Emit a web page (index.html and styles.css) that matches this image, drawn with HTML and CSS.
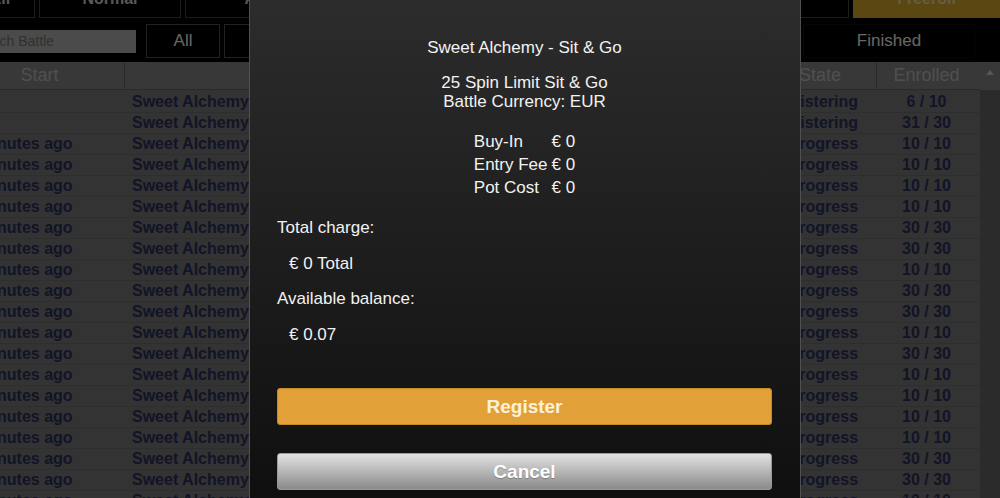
FILE: index.html
```html
<!DOCTYPE html>
<html lang="en">
<head>
    <meta charset="UTF-8">
    <meta name="viewport" content="width=device-width, initial-scale=1.0">
    <title>Battles - Register</title>
    <link rel="stylesheet" href="styles.css">
</head>
<body>
    <div class="page">
        <nav class="tabs">
            <a class="tab tab-small">All</a>
            <a class="tab tab-normal">Normal</a>
            <a class="tab tab-fill">Achievement</a>
            <a class="tab tab-fill">Tournament</a>
            <a class="tab tab-fill">Sit &amp; Go</a>
            <a class="tab tab-freeroll">Freeroll</a>
        </nav>

        <div class="filters">
            <input class="search" type="text" placeholder="Search Battle">
            <button class="filter filter-all">All</button>
            <button class="filter filter-fill">Registering</button>
            <button class="filter filter-fill">In Progress</button>
            <button class="filter filter-finished">Finished</button>
        </div>

        <div class="list">
            <div class="list-main">
                <div class="row row-head">
                    <div class="cell">Start</div>
                    <div class="cell">Battle</div>
                    <div class="cell">State</div>
                    <div class="cell cell-num">Enrolled</div>
                </div>
                <div class="list-body">
                    <div class="row"><div class="cell"></div><div class="cell">Sweet Alchemy - Sit &amp; Go</div><div class="cell">Registering</div><div class="cell cell-num">6 / 10</div></div>
                    <div class="row"><div class="cell"></div><div class="cell">Sweet Alchemy - Sit &amp; Go</div><div class="cell">Registering</div><div class="cell cell-num">31 / 30</div></div>
                    <div class="row"><div class="cell">2 minutes ago</div><div class="cell">Sweet Alchemy - Sit &amp; Go</div><div class="cell">In Progress</div><div class="cell cell-num">10 / 10</div></div>
                    <div class="row"><div class="cell">3 minutes ago</div><div class="cell">Sweet Alchemy - Sit &amp; Go</div><div class="cell">In Progress</div><div class="cell cell-num">10 / 10</div></div>
                    <div class="row"><div class="cell">3 minutes ago</div><div class="cell">Sweet Alchemy - Sit &amp; Go</div><div class="cell">In Progress</div><div class="cell cell-num">10 / 10</div></div>
                    <div class="row"><div class="cell">4 minutes ago</div><div class="cell">Sweet Alchemy - Sit &amp; Go</div><div class="cell">In Progress</div><div class="cell cell-num">10 / 10</div></div>
                    <div class="row"><div class="cell">4 minutes ago</div><div class="cell">Sweet Alchemy - Sit &amp; Go</div><div class="cell">In Progress</div><div class="cell cell-num">30 / 30</div></div>
                    <div class="row"><div class="cell">5 minutes ago</div><div class="cell">Sweet Alchemy - Sit &amp; Go</div><div class="cell">In Progress</div><div class="cell cell-num">30 / 30</div></div>
                    <div class="row"><div class="cell">5 minutes ago</div><div class="cell">Sweet Alchemy - Sit &amp; Go</div><div class="cell">In Progress</div><div class="cell cell-num">10 / 10</div></div>
                    <div class="row"><div class="cell">6 minutes ago</div><div class="cell">Sweet Alchemy - Sit &amp; Go</div><div class="cell">In Progress</div><div class="cell cell-num">30 / 30</div></div>
                    <div class="row"><div class="cell">6 minutes ago</div><div class="cell">Sweet Alchemy - Sit &amp; Go</div><div class="cell">In Progress</div><div class="cell cell-num">30 / 30</div></div>
                    <div class="row"><div class="cell">7 minutes ago</div><div class="cell">Sweet Alchemy - Sit &amp; Go</div><div class="cell">In Progress</div><div class="cell cell-num">10 / 10</div></div>
                    <div class="row"><div class="cell">7 minutes ago</div><div class="cell">Sweet Alchemy - Sit &amp; Go</div><div class="cell">In Progress</div><div class="cell cell-num">30 / 30</div></div>
                    <div class="row"><div class="cell">8 minutes ago</div><div class="cell">Sweet Alchemy - Sit &amp; Go</div><div class="cell">In Progress</div><div class="cell cell-num">10 / 10</div></div>
                    <div class="row"><div class="cell">8 minutes ago</div><div class="cell">Sweet Alchemy - Sit &amp; Go</div><div class="cell">In Progress</div><div class="cell cell-num">10 / 10</div></div>
                    <div class="row"><div class="cell">9 minutes ago</div><div class="cell">Sweet Alchemy - Sit &amp; Go</div><div class="cell">In Progress</div><div class="cell cell-num">10 / 10</div></div>
                    <div class="row"><div class="cell">9 minutes ago</div><div class="cell">Sweet Alchemy - Sit &amp; Go</div><div class="cell">In Progress</div><div class="cell cell-num">10 / 10</div></div>
                    <div class="row"><div class="cell">9 minutes ago</div><div class="cell">Sweet Alchemy - Sit &amp; Go</div><div class="cell">In Progress</div><div class="cell cell-num">30 / 30</div></div>
                    <div class="row"><div class="cell">9 minutes ago</div><div class="cell">Sweet Alchemy - Sit &amp; Go</div><div class="cell">In Progress</div><div class="cell cell-num">30 / 30</div></div>
                    <div class="row"><div class="cell">9 minutes ago</div><div class="cell">Sweet Alchemy - Sit &amp; Go</div><div class="cell">In Progress</div><div class="cell cell-num">10 / 10</div></div>
                </div>
            </div>
            <div class="scrollbar">
                <div class="scroll-up"><span class="arrow-up"></span></div>
            </div>
        </div>
    </div>

    <div class="overlay"></div>

    <div class="dialog">
        <p class="dialog-title">Sweet Alchemy - Sit &amp; Go</p>
        <p class="dialog-info">25 Spin Limit Sit &amp; Go<br>Battle Currency: EUR</p>

        <table class="fees">
            <tr><td>Buy-In</td><td>&euro; 0</td></tr>
            <tr><td>Entry Fee</td><td>&euro; 0</td></tr>
            <tr><td>Pot Cost</td><td>&euro; 0</td></tr>
        </table>

        <p class="label">Total charge:</p>
        <p class="amount">&euro; 0 Total</p>
        <p class="label">Available balance:</p>
        <p class="amount">&euro; 0.07</p>

        <div class="dialog-buttons">
            <button class="btn btn-register">Register</button>
            <button class="btn btn-cancel">Cancel</button>
        </div>
    </div>
</body>
</html>
```

FILE: styles.css
```css
html, body {
    margin: 0;
    height: 100%;
    overflow: hidden;
}

body {
    font-family: "Liberation Sans", Arial, sans-serif;
    background-color: #000;
    color: #fff;
}

/* page under the dialog, scrolled a little to the left/top */
.page {
    margin: -20px 0 0 -38px;
    width: calc(100% + 38px);
}

.tabs {
    display: flex;
    gap: 4px;
    padding-left: 3px;
    height: 38px;
}

.tab {
    box-sizing: border-box;
    border: 1px solid #4a4a4a;
    border-top: none;
    background-color: #000;
    color: #dcdcdc;
    font-size: 16px;
    font-weight: bold;
    display: flex;
    align-items: center;
    justify-content: center;
}

.tab-small {
    width: 70px;
}

.tab-normal {
    width: 142px;
}

.tab-fill {
    flex: 1;
}

.tab-freeroll {
    width: 147px;
    background-color: #e4b12c;
    border-color: #e4b12c;
    color: #fbe9b0;
}

.filters {
    display: flex;
    align-items: center;
    gap: 4px;
    height: 36px;
    margin: 5px 0 3px;
    padding-left: 3px;
}

.search {
    box-sizing: border-box;
    width: 171px;
    height: 23px;
    margin-right: 6px;
    padding: 0 5px;
    border: none;
    background-color: #bcbcbc;
    font-family: "Liberation Sans", Arial, sans-serif;
    font-size: 14px;
}

.search::placeholder {
    color: #7a7a7a;
}

.filter {
    height: 34px;
    background-color: #000;
    border: 1px solid #555;
    color: #fff;
    font-family: "Liberation Sans", Arial, sans-serif;
    font-size: 17px;
}

.filter-all {
    width: 74px;
}

.filter-fill {
    flex: 1;
}

.filter-finished {
    width: 172px;
    border-color: #111;
    margin-right: 25px;
}

.list {
    display: flex;
}

.list-main {
    flex: 1;
}

.row {
    display: grid;
    grid-template-columns: 163px 1fr 113px 103px;
    height: 21px;
    box-sizing: border-box;
    border-bottom: 1px solid #737373;
    background-color: #7f7f7f;
    color: #2f3363;
    font-size: 16px;
    font-weight: bold;
    line-height: 20px;
}

.cell {
    padding: 0 6px;
    white-space: nowrap;
    overflow: hidden;
}

.row .cell:first-child {
    padding-left: 3px;
}

.row .cell:nth-child(2) {
    padding-left: 7px;
}

.cell-num {
    text-align: center;
    padding-right: 10px;
}

.row-head {
    height: 28px;
    background-color: #8c8c8c;
    border-bottom: 1px solid #6a6a6a;
    color: #c6c6c6;
    font-size: 18px;
    font-weight: normal;
    line-height: 27px;
}

.row-head .cell {
    text-align: center;
    border-right: 1px solid #6a6a6a;
}

.row-head .cell:first-child {
    padding-right: 10px;
}

.row-head .cell:last-child {
    border-right: none;
}

.list-body {
    padding-top: 2px;
    background-color: #7f7f7f;
}

.scrollbar {
    width: 20px;
    background-color: #6c6c6c;
}

.scroll-up {
    height: 28px;
    background-color: #8c8c8c;
    display: flex;
    justify-content: center;
    padding-top: 8px;
    box-sizing: border-box;
}

.arrow-up {
    width: 0;
    height: 0;
    border-left: 4px solid transparent;
    border-right: 4px solid transparent;
    border-bottom: 5px solid #d8d8d8;
}

.overlay {
    position: fixed;
    inset: 0;
    background-color: rgba(0, 0, 0, 0.6);
}

/* register dialog */
.dialog {
    position: fixed;
    top: 0;
    bottom: -20px;
    left: 249px;
    width: 552px;
    box-sizing: border-box;
    border-left: 1px solid #505050;
    border-right: 1px solid #505050;
    padding: 38px 28px 0 27px;
    background: linear-gradient(#2c2c2c, #0e0e0e);
    color: #f2f2f2;
    font-size: 17px;
    line-height: 19px;
}

.dialog p {
    margin: 0;
}

.dialog-title {
    text-align: center;
}

.dialog-info {
    text-align: center;
    margin-top: 16px !important;
}

.fees {
    margin: 19px auto 0;
    border-collapse: separate;
    border-spacing: 4px 0;
}

.fees td {
    padding: 0;
    height: 23px;
}

.label {
    margin-top: 19px !important;
}

.amount + .label {
    margin-top: 16px !important;
}

.amount {
    margin-top: 17px !important;
    padding-left: 12px;
}

.dialog-buttons {
    display: flex;
    flex-direction: column;
    gap: 28px;
    margin-top: 44px;
}

.btn {
    height: 37px;
    border-radius: 3px;
    font-family: "Liberation Sans", Arial, sans-serif;
    font-size: 19px;
    font-weight: bold;
    cursor: pointer;
}

.btn-register {
    background-color: #e1a038;
    border: 1px solid #c98a26;
    color: #fdf1d8;
}

.btn-cancel {
    background: linear-gradient(#e2e2e2, #8a8a8a);
    border: 1px solid #9a9a9a;
    color: #fff;
    text-shadow: 0 1px 1px rgba(0, 0, 0, 0.25);
}
```
